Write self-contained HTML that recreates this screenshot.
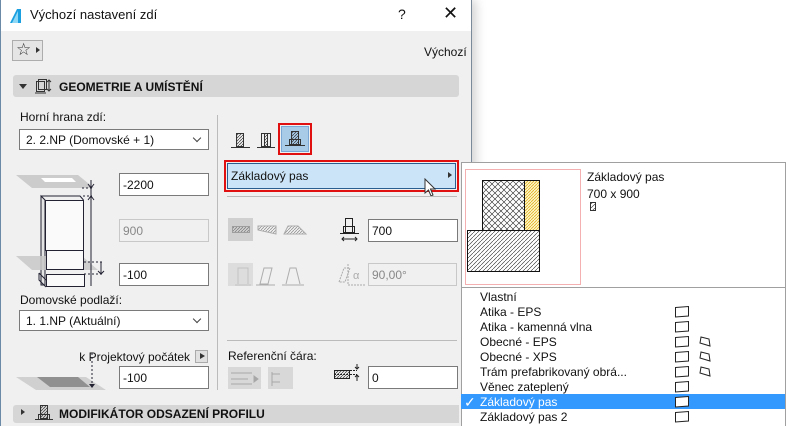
<!DOCTYPE html>
<html><head><meta charset="utf-8">
<style>
*{box-sizing:border-box;margin:0;padding:0}
body{width:786px;height:426px;overflow:hidden;background:#fff;font-family:"Liberation Sans",sans-serif;font-size:12px;color:#111;position:relative}
.a{position:absolute}
.dlg{left:0;top:0;width:472px;height:426px;background:#f0f0f0;border-left:1px solid #6b8aa8;border-right:1px solid #7a8a9a;box-shadow:4px 0 10px rgba(0,0,0,.18)}
.tb{left:1px;top:0;width:470px;height:31px;background:#fff}
.inp{position:absolute;background:#fff;border:1px solid #7a7a7a;height:23px;padding:4px 3px;font-size:12px}
.dis{background:#f0f0f0;border-color:#c8c8c8;color:#888}
.dd{position:absolute;background:#fff;border:1px solid #7a7a7a;height:21px;padding:3px 6px;font-size:12px}
.dd:after{content:"";position:absolute;right:8px;top:5px;width:5px;height:5px;border-right:1px solid #444;border-bottom:1px solid #444;transform:rotate(45deg)}
.sec{position:absolute;left:13px;width:446px;background:#d6d6d6;border-radius:3px;font-weight:bold;font-size:12px}
.li{position:absolute;left:20px;font-size:12px;height:15px;line-height:15px}
</style></head><body>
<div class="a dlg"></div>
<div class="a tb"></div>
<svg class="a" style="left:9px;top:8px" width="15" height="16"><path d="M1 15 L8 1 L12 1 L12 15 Z" fill="#1aa0e0"/><path d="M3 15 L9 3 L9 15Z" fill="#8fd8f5"/></svg>
<div class="a" style="left:30px;top:7px;font-size:13px">Výchozí nastavení zdí</div>
<div class="a" style="left:398px;top:6px;font-size:14px">?</div>
<div class="a" style="left:443px;top:3px;font-size:18px;font-weight:300">✕</div>
<div class="a" style="left:12px;top:40px;width:31px;height:21px;border:1px solid #adadad;background:#e5e5e5"></div>
<div class="a" style="left:16px;top:40px;font-size:17px;color:#333">☆</div>
<div class="a" style="left:36px;top:47px;border-left:4px solid #333;border-top:3.5px solid transparent;border-bottom:3.5px solid transparent"></div>
<div class="a" style="left:424px;top:45px">Výchozí</div>
<div class="sec" style="top:75px;height:22px"></div>
<div class="a" style="left:19px;top:84px;border-top:5px solid #333;border-left:4px solid transparent;border-right:4px solid transparent"></div>
<svg class="a" style="left:34px;top:79px" width="18" height="16"><rect x="2.5" y="2.5" width="8" height="10" fill="none" stroke="#333"/><rect x="4.5" y="0.5" width="8" height="10" fill="none" stroke="#333"/><path d="M1 14 L12 14 M15 1 V12 M13 3 L15 1 L17 3 M13 10 L15 12 L17 10" stroke="#333" fill="none"/></svg>
<div class="a" style="left:59px;top:80px;font-weight:bold">GEOMETRIE A UMÍSTĚNÍ</div>
<div class="a" style="left:20px;top:110px">Horní hrana zdí:</div>
<div class="dd" style="left:19px;top:129px;width:190px">2. 2.NP (Domovské + 1)</div>
<svg class="a" style="left:16px;top:170px" width="90" height="122">
<path d="M0 5 H62 L78 18 H16Z" fill="#ccc"/><path d="M25 8 H56 L60 12 H29Z" fill="#fff"/>
<path d="M25 26 L29 30 V115 H25Z" fill="#e4e4e4" stroke="#223"/>
<rect x="29.5" y="30.5" width="38" height="50" fill="#fafafa" stroke="#223"/>
<path d="M25 26 H64 L67.5 30" fill="none" stroke="#223"/>
<path d="M0 86 H66 L82 100 H16Z" fill="#c8c8c8" opacity=".85"/>
<rect x="30.5" y="80.5" width="37" height="19" fill="#fafafa" stroke="#223"/>
<path d="M23 103 V110 L30 117 M23 103 L30 110" stroke="#223" fill="none"/>
<rect x="30.5" y="104.5" width="38" height="12" fill="#fafafa" stroke="#223"/>
<path d="M66 18 H76 M67 26 H76 M68 92 H88 M68 104 H88" stroke="#223" stroke-dasharray="2 2"/>
<path d="M75 10 V116 M85 92 V104" stroke="#223"/>
<path d="M72 14 L75 18 L78 14 M72 30 L75 26 L78 30 M82 101 L85 104 L88 101" fill="none" stroke="#223"/>
</svg>
<div class="inp" style="left:119px;top:173px;width:90px">-2200</div>
<div class="inp dis" style="left:119px;top:219px;width:90px">900</div>
<div class="inp" style="left:119px;top:263px;width:90px">-100</div>
<div class="a" style="left:20px;top:293px">Domovské podlaží:</div>
<div class="dd" style="left:19px;top:310px;width:190px">1. 1.NP (Aktuální)</div>
<div class="a" style="right:596px;top:350px;white-space:nowrap">k Projektový počátek</div>
<div class="a" style="left:195px;top:350px;width:13px;height:13px;border:1px solid #aaa;background:#e0e0e0"></div>
<div class="a" style="left:200px;top:353px;border-left:5px solid #333;border-top:3.5px solid transparent;border-bottom:3.5px solid transparent"></div>
<svg class="a" style="left:16px;top:350px" width="92" height="42"><path d="M0 27 H70 L90 40 H20Z" fill="#d0d0d0"/><path d="M21 27 H62 L74 37 H34Z" fill="#909090"/><path d="M76 3 V36" stroke="#223" stroke-dasharray="2 2"/><path d="M73 34 L76 38 L79 34" fill="#223"/></svg>
<div class="inp" style="left:119px;top:366px;width:90px">-100</div>
<div class="a" style="left:217px;top:115px;width:1px;height:275px;background:#bbb"></div>
<svg class="a" style="left:230px;top:130px" width="80" height="22">
<g stroke="#333" fill="none"><rect x="6.5" y="3.5" width="7" height="13" fill="url(#h)"/><path d="M1 17.5 H20"/>
<rect x="31.5" y="3.5" width="9" height="13"/><rect x="34.5" y="3.5" width="3" height="13" fill="url(#h)"/><path d="M27 17.5 H45"/></g>
<defs><pattern id="h" width="3" height="3" patternUnits="userSpaceOnUse"><path d="M0 3 L3 0" stroke="#333" stroke-width=".7"/></pattern></defs>
</svg>
<div class="a" style="left:278px;top:123px;width:34px;height:32px;border:2px solid #e01010"></div>
<div class="a" style="left:281px;top:126px;width:28px;height:26px;background:#a8cbe8;border:1px solid #7aa8d6"></div>
<svg class="a" style="left:282px;top:128px" width="26" height="22"><g stroke="#333" fill="none"><rect x="9.5" y="3.5" width="7" height="13" fill="url(#h)"/><rect x="7.5" y="11.5" width="11" height="5"/><path d="M3 17.5 H23"/></g></svg>
<div class="a" style="left:224px;top:160px;width:235px;height:32px;border:2px solid #e01010"></div>
<div class="a" style="left:227px;top:163px;width:229px;height:26px;background:#cce4f7;border:1px solid #2a5d90"></div>
<div class="a" style="left:231px;top:169px">Základový pas</div>
<div class="a" style="left:448px;top:172px;border-left:4px solid #333;border-top:3.5px solid transparent;border-bottom:3.5px solid transparent"></div>
<svg class="a" style="left:424px;top:178px" width="14" height="20"><path d="M1 1 V15 L4.5 12 L7 18 L9 17 L6.5 11 L11 11Z" fill="#fff" stroke="#333"/></svg>
<div class="a" style="left:227px;top:196px;width:230px;height:1px;background:#bbb"></div>
<div class="a" style="left:228px;top:218px;width:25px;height:23px;background:#d0d0d0"></div>
<svg class="a" style="left:228px;top:218px" width="80" height="70" opacity=".55">
<g stroke="#777" fill="none"><rect x="4.5" y="8.5" width="17" height="6" fill="url(#h)"/><path d="M30 8 H48 V16 L30 12Z" fill="url(#h)"/><path d="M60 8 H70 L78 16 H56Z" fill="url(#h)"/>
<path d="M7 67 H23 M10 66 V50 H20 V66 M32 66 L36 50 H44 L40 66 Z M28 67 H47 M58 66 L62 50 H68 L72 66 M54 67 H76"/></g></svg>
<div class="a" style="left:228px;top:263px;width:25px;height:23px;background:#d0d0d0;opacity:.6"></div>
<svg class="a" style="left:339px;top:217px" width="22" height="26"><g stroke="#222" fill="none"><rect x="6.5" y="1.5" width="7" height="14"/><rect x="4.5" y="9.5" width="11" height="6"/><path d="M1 16.5 H20 M3 22 H18 M5 20 L3 22 L5 24 M16 20 L18 22 L16 24"/></g></svg>
<div class="inp" style="left:368px;top:219px;width:90px">700</div>
<svg class="a" style="left:336px;top:263px" width="32" height="24" opacity=".5"><g stroke="#666" fill="none"><path d="M3 19 L8 5 H14 L9 19Z M12 1 V22 H30" stroke-dasharray="2 1"/></g><text x="17" y="16" font-size="11" fill="#666" font-family="Liberation Sans">α</text></svg>
<div class="inp dis" style="left:368px;top:263px;width:89px">90,00°</div>
<div class="a" style="left:227px;top:340px;width:230px;height:1px;background:#bbb"></div>
<div class="a" style="left:228px;top:349px">Referenční čára:</div>
<div class="a" style="left:228px;top:367px;width:33px;height:22px;background:#d8d8d8"></div>
<div class="a" style="left:268px;top:367px;width:25px;height:22px;background:#d8d8d8"></div>
<svg class="a" style="left:228px;top:367px" width="66" height="22" opacity=".5"><g stroke="#777" fill="none"><path d="M3 6 H24 M3 12 H20 M3 17 H24 M44 7 H52 M44 15 H52 M44 5 V19"/><path d="M26 9 L30 12 L26 15Z" fill="#777"/></g></svg>
<svg class="a" style="left:333px;top:361px" width="28" height="28"><g stroke="#222" fill="none"><rect x="1.5" y="9.5" width="15" height="8" fill="url(#h)"/><path d="M1 13.5 H16 M17 9.5 H24 M17 13.5 H24" stroke-dasharray="2 1"/><path d="M24 3 V8 M22 6 L24 8 L26 6 M24 20 V14 M22 16 L24 14 L26 16"/></g></svg>
<div class="inp" style="left:368px;top:366px;width:90px">0</div>
<div class="sec" style="top:405px;height:18px;width:446px;border-radius:3px 0 0 3px"></div>
<div class="a" style="left:21px;top:409px;border-left:4px solid #333;border-top:3.5px solid transparent;border-bottom:3.5px solid transparent"></div>
<svg class="a" style="left:34px;top:403px" width="20" height="20"><g stroke="#333" fill="none"><rect x="6.5" y="2.5" width="7" height="13" fill="url(#h)"/><rect x="4.5" y="11.5" width="11" height="5"/><path d="M1 16.5 H19"/></g></svg>
<div class="a" style="left:59px;top:407px;font-weight:bold">MODIFIKÁTOR ODSAZENÍ PROFILU</div>
<div class="a" style="left:461px;top:162px;width:325px;height:264px;background:#fff;border:1px solid #a0a0a0;border-bottom:none"></div>
<div class="a" style="left:465px;top:169px;width:116px;height:116px;border:1px solid #f4b0b0"></div>
<svg class="a" style="left:465px;top:169px" width="116" height="116">
<defs><pattern id="x" width="6" height="6" patternUnits="userSpaceOnUse"><path d="M0 0 L6 6 M6 0 L0 6" stroke="#222" stroke-width=".6"/></pattern>
<pattern id="y" width="3" height="3" patternUnits="userSpaceOnUse"><rect width="3" height="3" fill="#fff6c8"/><path d="M0 3 L3 0" stroke="#e0b020" stroke-width=".8"/></pattern>
<pattern id="d" width="4" height="4" patternUnits="userSpaceOnUse"><path d="M0 4 L4 0" stroke="#222" stroke-width=".6"/></pattern></defs>
<rect x="17.5" y="11.5" width="42" height="50" fill="url(#x)" stroke="#111"/>
<rect x="59.5" y="11.5" width="15" height="50" fill="url(#y)" stroke="#111"/>
<rect x="2.5" y="61.5" width="72" height="41" fill="url(#d)" stroke="#111"/>
</svg>
<div class="a" style="left:587px;top:170px">Základový pas</div>
<div class="a" style="left:587px;top:187px">700 x 900</div>
<svg class="a" style="left:587px;top:200px" width="12" height="12"><rect x="3.5" y="2.5" width="5" height="8" fill="url(#d)" stroke="#333"/></svg>
<div class="a" style="left:461px;top:287px;width:325px;height:1px;background:#a0a0a0"></div>
<div class="a" style="left:461px;top:394px;width:324px;height:15px;background:#3399ff"></div>
<div class="li" style="left:480px;top:290px">Vlastní</div>
<div class="li" style="left:480px;top:305px">Atika - EPS</div>
<div class="li" style="left:480px;top:320px">Atika - kamenná vlna</div>
<div class="li" style="left:480px;top:335px">Obecné - EPS</div>
<div class="li" style="left:480px;top:350px">Obecné - XPS</div>
<div class="li" style="left:480px;top:365px">Trám prefabrikovaný obrá...</div>
<div class="li" style="left:480px;top:380px">Věnec zateplený</div>
<div class="li" style="left:464px;top:395px;color:#fff;font-size:14px">✓</div>
<div class="li" style="left:480px;top:395px;color:#fff">Základový pas</div>
<div class="li" style="left:480px;top:410px">Základový pas 2</div>
<svg class="a" style="left:672px;top:304px" width="50" height="122"><g stroke="#222" fill="#fff">
<path d="M3.5 3.5 L16.5 2.5 V12 L3.5 13Z"/><path d="M3.5 18.5 L16.5 17.5 V27 L3.5 28Z"/><path d="M3.5 33.5 L16.5 32.5 V42 L3.5 43Z"/><path d="M3.5 48.5 L16.5 47.5 V57 L3.5 58Z"/><path d="M3.5 63.5 L16.5 62.5 V72 L3.5 73Z"/><path d="M3.5 78.5 L16.5 77.5 V87 L3.5 88Z"/><path d="M3.5 93.5 L16.5 92.5 V102 L3.5 103Z"/><path d="M3.5 108.5 L16.5 107.5 V117 L3.5 118Z"/>
<path d="M29 33 L37 35 L38 42 L28 39Z"/><path d="M29 48 L37 50 L38 57 L28 54Z"/><path d="M29 63 L37 65 L38 72 L28 69Z"/></g></svg>
</body></html>
